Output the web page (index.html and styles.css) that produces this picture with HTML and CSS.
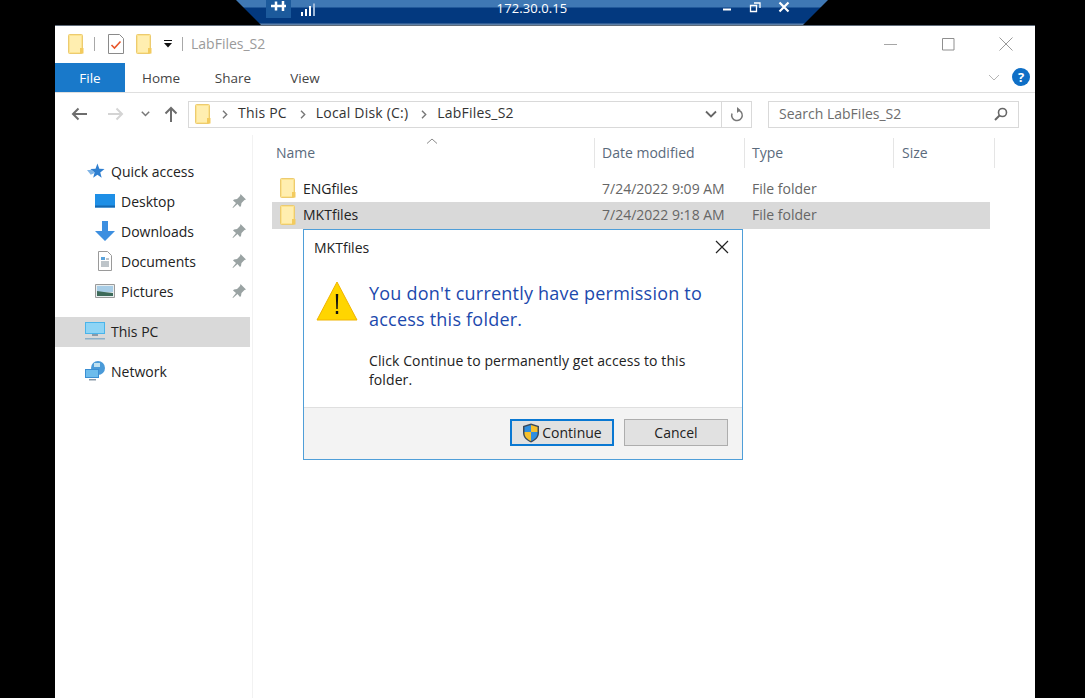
FILE: index.html
```html
<!DOCTYPE html>
<html lang="en">
<head>
    <meta charset="UTF-8">
    <title>LabFiles_S2</title>
    <link rel="stylesheet" href="styles.css">
</head>
<body>
    <svg class="defs" width="0" height="0">
        <symbol id="folder" viewBox="0 0 16 20">
            <path d="M.5 1.500a1 1 0 0 1 1-1h12a1 1 0 0 1 1 1v17a1 1 0 0 1-1 1h-12a1 1 0 0 1-1-1z" fill="#fde48f" stroke="#eccb70"/>
            <path d="M2 2h11v16H2z" fill="#ffeeb0"/>
            <path d="M12 14h3.500v5.500H12z" fill="#f3cb5e"/>
        </symbol>
        <symbol id="pin" viewBox="0 0 14 14">
            <path d="M8.500 0L14 5.500l-1.500.5-3 3-.5 3-1 1-2.500-3L1 14l-.5-.5L4 9 1 6.500l1-1 3-.5 3-3z" fill="#9aa3a3"/>
        </symbol>
    </svg>

    <!-- barra de la sesion remota -->
    <div class="rdp-bar">
        <div class="rdp-left">
            <span class="rdp-pin"><svg width="18" height="12" viewBox="0 0 18 12"><path d="M1 6h15M6 1.500v9M13 1v10" stroke="#fff" stroke-width="2.500" fill="none"/></svg></span>
            <svg width="16" height="13" viewBox="0 0 16 13"><path d="M1 9h2v4H1zM5 6h2v7H5zM9 3h2v10H9z" fill="#fff"/><path d="M13 .5h2v12.500h-2z" fill="#9db8d8"/></svg>
        </div>
        <div class="rdp-title">172.30.0.15</div>
        <div class="rdp-btns">
            <svg width="10" height="12" viewBox="0 0 10 12"><path d="M1 8.500h8" stroke="#fff" stroke-width="2"/></svg>
            <svg width="12" height="12" viewBox="0 0 12 12"><path d="M1.500 4.500h6v6h-6z" stroke="#fff" stroke-width="1.300" fill="none"/><path d="M5 2h6v5" stroke="#fff" stroke-width="1.300" fill="none"/></svg>
            <svg width="12" height="12" viewBox="0 0 12 12"><path d="M1.500 1.500l9 9M10.500 1.500l-9 9" stroke="#fff" stroke-width="2.200"/></svg>
        </div>
    </div>

    <div class="window">
        <div class="titlebar">
            <svg class="folder-qa" width="16" height="20"><use href="#folder"/></svg>
            <span class="qa-sep"></span>
            <svg class="qa-props" width="16" height="20" viewBox="0 0 16 20"><path d="M.5.500h11l4 4v15H.5z" fill="#fff" stroke="#8a8a8a"/><path d="M3.500 11l3 3 6-6.500" stroke="#e8562a" stroke-width="1.600" fill="none"/></svg>
            <svg class="qa-new" width="16" height="20"><use href="#folder"/></svg>
            <svg class="qa-drop" width="10" height="8" viewBox="0 0 10 8"><path d="M1 .5h8" stroke="#111"/><path d="M1 3h8L5 7.500z" fill="#111"/></svg>
            <span class="qa-sep last"></span>
            <span class="title-text">LabFiles_S2</span>
            <div class="win-btns">
                <svg width="14" height="14" viewBox="0 0 14 14"><path d="M1 7.500h13" stroke="#a6a6a6"/></svg>
                <svg width="14" height="14" viewBox="0 0 14 14"><path d="M1.500 1.500h11.500v11.500H1.500z" stroke="#8f8f8f" fill="none"/></svg>
                <svg width="14" height="14" viewBox="0 0 14 14"><path d="M.5.500l13 13M13.500.500l-13 13" stroke="#999" fill="none"/></svg>
            </div>
        </div>

        <div class="ribbon">
            <div class="tab file">File</div>
            <div class="tab">Home</div>
            <div class="tab">Share</div>
            <div class="tab">View</div>
            <svg class="rib-chev" width="12" height="7" viewBox="0 0 12 7"><path d="M1 1l5 5 5-5" stroke="#b5b5b5" fill="none"/></svg>
            <span class="help">?</span>
        </div>

        <div class="navbar">
            <svg class="nav-ic" width="16" height="14" viewBox="0 0 16 14"><path d="M16 7H2M7.500 1.500L2 7l5.500 5.500" stroke="#6d6d6d" stroke-width="2" fill="none"/></svg>
            <svg class="nav-ic" width="16" height="14" viewBox="0 0 16 14"><path d="M0 7h14M8.500 1.500L14 7l-5.500 5.500" stroke="#d4d4d4" stroke-width="2" fill="none"/></svg>
            <svg class="nav-ic small" width="9" height="6" viewBox="0 0 9 6"><path d="M.8.800L4.500 4.500 8.200.800" stroke="#777" stroke-width="1.500" fill="none"/></svg>
            <svg class="nav-ic" width="14" height="16" viewBox="0 0 14 16"><path d="M7 16V2M1.500 7.500L7 2l5.500 5.500" stroke="#6d6d6d" stroke-width="2" fill="none"/></svg>
            <div class="address">
                <svg class="addr-folder" width="16" height="20"><use href="#folder"/></svg>
                <svg class="crumb-sep" width="6" height="9" viewBox="0 0 6 9"><path d="M1 .8l3.700 3.700L1 8.200" stroke="#777" stroke-width="1.400" fill="none"/></svg><span class="crumb">This PC</span>
                <svg class="crumb-sep" width="6" height="9" viewBox="0 0 6 9"><path d="M1 .8l3.700 3.700L1 8.200" stroke="#777" stroke-width="1.400" fill="none"/></svg><span class="crumb">Local Disk (C:)</span>
                <svg class="crumb-sep" width="6" height="9" viewBox="0 0 6 9"><path d="M1 .8l3.700 3.700L1 8.200" stroke="#777" stroke-width="1.400" fill="none"/></svg><span class="crumb">LabFiles_S2</span>
                <svg class="addr-drop" width="12" height="8" viewBox="0 0 12 8"><path d="M1 1.500l5 5 5-5" stroke="#666" stroke-width="1.800" fill="none"/></svg>
                <span class="addr-refresh"><svg width="14" height="15" viewBox="0 0 14 15"><path d="M7 3a5.300 5.300 0 1 1-5 3.500" stroke="#777" stroke-width="1.500" fill="none"/><path d="M7 0v6l3.500-3z" fill="#777"/></svg></span>
            </div>
            <div class="search">
                <span>Search LabFiles_S2</span>
                <svg width="14" height="14" viewBox="0 0 14 14"><circle cx="8.500" cy="5.500" r="4" stroke="#666" stroke-width="1.600" fill="none"/><path d="M5.500 8.500L1 13" stroke="#666" stroke-width="2"/></svg>
            </div>
        </div>

        <div class="main">
            <nav class="sidebar">
                <div class="side-item top quick">
                    <svg width="18" height="16" viewBox="0 0 19 16"><path d="M11 0l2 5.500 5.500.5-4.500 3.500 1.500 5.500-4.500-3-4.500 3L8 9.500 3.500 6 9 5.500z" fill="#2f7fd0"/><path d="M0 7h5l3 3-4 2z" fill="#7fb4e6"/></svg>
                    Quick access
                </div>
                <div class="side-item sub">
                    <svg width="20" height="16" viewBox="0 0 20 16"><path d="M0 1h20v13.500H0z" fill="#1e8fe6"/><path d="M0 12.500h20v2H0z" fill="#1668b0"/></svg>
                    Desktop <svg class="pin" width="14" height="14"><use href="#pin"/></svg>
                </div>
                <div class="side-item sub">
                    <svg width="20" height="20" viewBox="0 0 20 20"><path d="M7 0h6v10h7l-10 10L0 10h7z" fill="#3d8fe0"/></svg>
                    Downloads <svg class="pin" width="14" height="14"><use href="#pin"/></svg>
                </div>
                <div class="side-item sub">
                    <svg width="20" height="20" viewBox="0 0 20 20"><path d="M3.500.500h9l4 4v15h-13z" fill="#fff" stroke="#9a9a9a"/><path d="M6 6h4v3H6z" fill="#5aa3dc"/><path d="M6 11h8M6 13h8M6 15h8M11 8h3" stroke="#7c8a94"/></svg>
                    Documents <svg class="pin" width="14" height="14"><use href="#pin"/></svg>
                </div>
                <div class="side-item sub">
                    <svg width="20" height="14" viewBox="0 0 20 14"><path d="M.5.500h19v13H.5z" fill="#e8eef0" stroke="#9a9a9a"/><path d="M2 2h16v6H2z" fill="#a8cde6"/><path d="M2 7l7 1 9 1v3H2z" fill="#3d6b5a"/></svg>
                    Pictures <svg class="pin" width="14" height="14"><use href="#pin"/></svg>
                </div>
                <div class="side-item top pc">
                    <svg width="20" height="18" viewBox="0 0 20 18"><path d="M0 0h20v12H0z" fill="#4ab4ea"/><path d="M1 1h18v10H1z" fill="#8ed4f5"/><path d="M7 12h6v2H7z" fill="#8a9aa8"/><path d="M0 16h20v1.500H0z" fill="#8db0c8"/></svg>
                    This PC
                </div>
                <div class="side-item top net">
                    <svg width="20" height="20" viewBox="0 0 20 20"><circle cx="13" cy="7" r="7" fill="#4a9ad8"/><path d="M9 2h6v4H9z" fill="#bfe0f0"/><path d="M0 8h14v9H0z" fill="#3a8ed2"/><path d="M1 9h12v7H1z" fill="#6cbcec"/><path d="M4 18h7v1.500H4z" fill="#8a9aa8"/></svg>
                    Network
                </div>
            </nav>

            <div class="files">
                <svg class="sort-up" width="12" height="6" viewBox="0 0 12 6"><path d="M1 5.500L6 1l5 4.500" stroke="#8a8a8a" fill="none"/></svg>
                <div class="file-head">
                    <div class="col-name">Name</div>
                    <div class="col-date">Date modified</div>
                    <div class="col-type">Type</div>
                    <div class="col-size">Size</div>
                </div>
                <div class="file-row">
                    <div class="col-name"><svg width="16" height="20"><use href="#folder"/></svg><span class="fname">ENGfiles</span></div>
                    <div class="col-date">7/24/2022 9:09 AM</div>
                    <div class="col-type">File folder</div>
                </div>
                <div class="file-row selected">
                    <div class="col-name"><svg width="16" height="20"><use href="#folder"/></svg><span class="fname">MKTfiles</span></div>
                    <div class="col-date">7/24/2022 9:18 AM</div>
                    <div class="col-type">File folder</div>
                </div>
            </div>
        </div>
    </div>

    <!-- dialogo de permisos -->
    <div class="dialog">
        <div class="dlg-title">
            <span>MKTfiles</span>
            <svg width="14" height="14" viewBox="0 0 14 14"><path d="M1 1l12 12M13 1L1 13" stroke="#222" stroke-width="1.200"/></svg>
        </div>
        <div class="dlg-body">
            <svg class="warn" width="42" height="42" viewBox="0 0 42 42"><path d="M21 2l20 38H1z" fill="#ffd500" stroke="#f0b400"/><path d="M19.800 14h2.400l-.5 15h-1.400z" fill="#111"/><path d="M19.800 31h2.400v3h-2.400z" fill="#111"/></svg>
            <div class="dlg-text">
                <div class="dlg-head">You don't currently have permission to access this folder.</div>
                <p>Click Continue to permanently get access to this folder.</p>
            </div>
        </div>
        <div class="dlg-foot">
            <button class="btn primary">
                <svg width="18" height="20" viewBox="0 0 18 20"><path d="M9 .5l8 2.500v7c0 4.500-3.500 7.500-8 9.500-4.500-2-8-5-8-9.500V3z" fill="#3b4a5a"/><path d="M9 2L2.500 4v5H9z" fill="#2f8ee0"/><path d="M9 2l6.500 2v5H9z" fill="#f7c02c"/><path d="M2.500 9H9v9c-3.500-1.500-6.500-4-6.500-8z" fill="#f7c02c"/><path d="M15.500 9H9v9c3.500-1.500 6.500-4 6.500-8z" fill="#2f8ee0"/></svg>
                Continue
            </button>
            <button class="btn">Cancel</button>
        </div>
    </div>
</body>
</html>
```

FILE: styles.css
```css
* {
    box-sizing: border-box;
}

body {
    margin: 0;
    height: 698px;
    overflow: hidden;
    background-color: #000;
    font-family: 'Open Sans', 'Noto Sans', sans-serif;
    font-size: 14px;
    color: #222;
}

svg {
    flex: none;
    display: block;
}

.defs {
    position: absolute;
}

/* barra remota */
.rdp-bar {
    width: 592px;
    height: 25px;
    margin-left: 236px;
    padding-left: 30px;
    display: flex;
    align-items: center;
    color: #fff;
    background: linear-gradient(#3f78b4 0, #3f78b4 7px, #03397f 8px, #03397f 23px, #5c7fa8 24px);
    clip-path: polygon(0 0, 100% 0, calc(100% - 25px) 100%, 25px 100%);
}

.rdp-left {
    flex: none;
    display: flex;
    align-items: center;
    gap: 9px;
    width: 226px;
}

.rdp-pin {
    width: 25px;
    height: 18px;
    margin-top: -7px;
    display: flex;
    align-items: center;
    justify-content: center;
    background-color: #1c5a9c;
}

.rdp-left svg {
    margin-top: -7px;
}

.rdp-title {
    flex: none;
    width: 80px;
    margin-top: -9px;
    font-size: 13px;
    letter-spacing: 0.1px;
    text-align: center;
}

.rdp-btns {
    flex: none;
    margin-left: 150px;
    margin-top: -11px;
    display: flex;
    gap: 17px;
}

/* ventana */
.window {
    width: 980px;
    height: 673px;
    margin-left: 55px;
    background-color: #fff;
    border-top: 1px solid #5e6a78;
}

.titlebar {
    height: 37px;
    display: flex;
    align-items: center;
    padding-left: 13px;
    padding-bottom: 2px;
}

.qa-sep {
    width: 1px;
    height: 14px;
    margin: 0 13px 0 10px;
    background-color: #a8a8a8;
}

.qa-sep.last {
    margin: 0 8px 0 9px;
}

.qa-new {
    margin-left: 12px;
}

.qa-drop {
    margin-left: 11px;
}

.title-text {
    color: #9a9a9a;
}

.win-btns {
    margin-left: auto;
    margin-right: 22px;
    display: flex;
    gap: 44px;
}

.ribbon {
    height: 30px;
    display: flex;
    align-items: center;
    border-bottom: 1px solid #dfdfdf;
    padding-right: 5px;
}

.tab {
    height: 29px;
    width: 72px;
    line-height: 30px;
    text-align: center;
    color: #444;
    font-size: 13.500px;
}

.tab.file {
    width: 70px;
    color: #fff;
    background-color: #1979ca;
}

.rib-chev {
    margin-left: auto;
    margin-right: 12px;
}

.help {
    width: 18px;
    height: 18px;
    margin-bottom: 2px;
    border-radius: 50%;
    background-color: #0f6fc6;
    color: #fff;
    font-weight: 700;
    font-size: 13px;
    line-height: 18px;
    text-align: center;
}

.navbar {
    height: 42px;
    display: flex;
    align-items: center;
    padding: 0 16px 0 16px;
}

.nav-ic {
    margin-right: 21px;
}

.nav-ic.small {
    margin-left: -4px;
    margin-right: 14px;
}

.nav-ic:nth-child(4) {
    margin-right: 10px;
}

.address {
    width: 564px;
    height: 27px;
    display: flex;
    align-items: center;
    border: 1px solid #d9d9d9;
    padding-left: 6px;
    color: #333;
}

.addr-folder {
    margin-right: 11px;
}

.crumb-sep {
    margin-right: 10px;
}

.crumb {
    margin-right: 12px;
    margin-bottom: 3px;
    letter-spacing: 0.2px;
    white-space: nowrap;
}

.crumb-sep + .crumb + .crumb-sep {
    margin-left: 1px;
}

.addr-drop {
    margin-left: auto;
    margin-right: 4px;
}

.addr-refresh {
    width: 30px;
    height: 25px;
    display: flex;
    align-items: center;
    justify-content: center;
    border-left: 1px solid #d9d9d9;
}

.search {
    width: 251px;
    height: 27px;
    margin-left: 16px;
    display: flex;
    align-items: center;
    justify-content: space-between;
    border: 1px solid #d9d9d9;
    padding: 0 10px;
    color: #6d6d6d;
}

.search span {
    margin-bottom: 2px;
}

.main {
    height: 563px;
    display: flex;
}

.sidebar {
    width: 198px;
    padding-top: 22px;
    border-right: 1px solid #f2f2f2;
}

.side-item {
    height: 30px;
    width: 195px;
    padding-bottom: 2px;
    display: flex;
    align-items: center;
    color: #222;
    white-space: nowrap;
}

.side-item svg {
    margin-right: 6px;
}

.side-item.quick {
    padding-left: 32px;
}

.side-item.sub {
    padding-left: 40px;
}

.side-item .pin {
    margin-left: auto;
    margin-right: 4px;
}

.side-item.pc {
    margin-top: 10px;
    background-color: #d9d9d9;
    padding-left: 30px;
}

.side-item.net {
    margin-top: 10px;
    padding-left: 30px;
}

.files {
    position: relative;
    flex: 1;
    padding: 0 0 0 19px;
}

.sort-up {
    position: absolute;
    left: 173px;
    top: 3px;
}

.file-head {
    height: 41px;
    padding-top: 3px;
    display: flex;
    color: #5a6a7c;
}

.file-head > div {
    height: 30px;
    line-height: 30px;
    border-right: 1px solid #e5e5e5;
}

.col-name {
    width: 323px;
    padding-left: 4px;
    display: flex;
    align-items: center;
}

.col-date {
    width: 150px;
    padding-left: 7px;
    color: #666;
}

.col-type {
    width: 149px;
    padding-left: 7px;
    color: #666;
}

.col-size {
    width: 101px;
    padding-left: 8px;
}

.file-head .col-date,
.file-head .col-type,
.file-head .col-size {
    color: #5a6a7c;
}

.file-row {
    width: 718px;
    height: 26px;
    padding-bottom: 2px;
    display: flex;
    align-items: center;
}

.file-row.selected {
    height: 27px;
    background-color: #d9d9d9;
}

.file-row .col-name {
    padding-left: 8px;
    color: #222;
}

.fname {
    margin-left: 7px;
}

/* dialogo */
.dialog {
    position: absolute;
    left: 303px;
    top: 229px;
    width: 440px;
    height: 231px;
    display: flex;
    flex-direction: column;
    background-color: #fff;
    border: 1px solid #4f9ed8;
}

.dlg-title {
    height: 36px;
    padding: 0 13px 2px 10px;
    display: flex;
    align-items: center;
    justify-content: space-between;
}

.dlg-body {
    flex: 1;
    display: flex;
    padding: 14px 20px 0 12px;
}

.dlg-text {
    margin-left: 11px;
}

.dlg-head {
    color: #1c49ad;
    font-size: 18px;
    line-height: 26px;
    letter-spacing: 0.22px;
}

.dlg-text p {
    width: 330px;
    margin: 19px 0 0;
    line-height: 19px;
    font-size: 14px;
    letter-spacing: 0.1px;
}

.dlg-foot {
    height: 52px;
    display: flex;
    align-items: center;
    justify-content: flex-end;
    gap: 10px;
    padding: 0 14px 2px 0;
    background-color: #f3f3f3;
    border-top: 1px solid #dfdfdf;
}

.btn {
    width: 104px;
    height: 27px;
    display: flex;
    align-items: center;
    justify-content: center;
    gap: 2px;
    font-family: inherit;
    font-size: 14px;
    color: #222;
    background-color: #e1e1e1;
    border: 1px solid #adadad;
}

.btn.primary {
    border: 2px solid #0a78d2;
}
```
